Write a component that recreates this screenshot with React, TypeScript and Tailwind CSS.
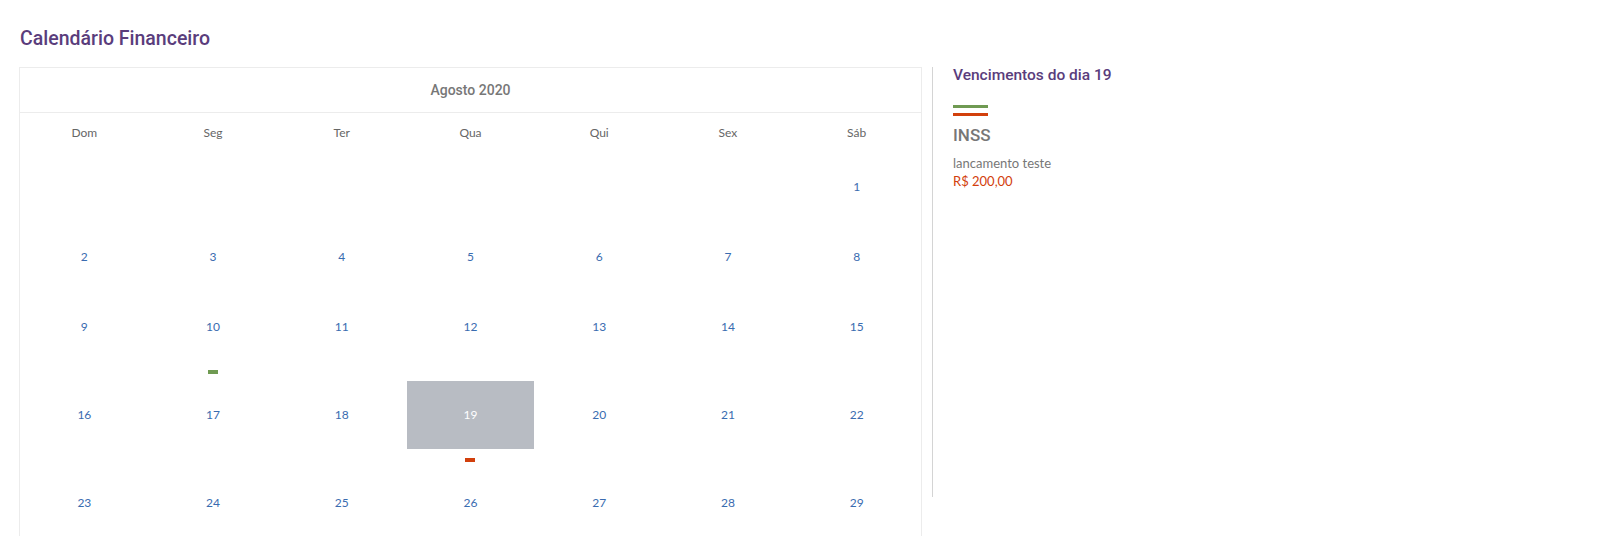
const weekdays = ['Dom', 'Seg', 'Ter', 'Qua', 'Qui', 'Sex', 'Sáb'];

const weeks: (number | null)[][] = [
  [null, null, null, null, null, null, 1],
  [2, 3, 4, 5, 6, 7, 8],
  [9, 10, 11, 12, 13, 14, 15],
  [16, 17, 18, 19, 20, 21, 22],
  [23, 24, 25, 26, 27, 28, 29],
  [30, 31, null, null, null, null, null],
];

// dias com vencimento -> cor da marca
const events: Record<number, string> = {
  10: 'bg-[#6f9a52]',
  19: 'bg-[#d2400c]',
};

const selected = 19;

export default function App() {
  return (
    <div className="min-h-screen bg-white pl-[19px] pt-[27px] font-['Roboto',sans-serif]">
      <h1 className="text-[19.5px] leading-[24px] font-medium text-[#5a3d7c] pl-px mb-[16px]">
        Calendário Financeiro
      </h1>

      <div className="flex items-start">
        {/* Calendar */}
        <div className="w-[903px] border border-[#ececec] border-b-0">
          <div className="h-[45px] border-b border-[#ececec] flex items-center justify-center text-[14px] font-medium text-[#777]">
            Agosto 2020
          </div>
          <div className="grid grid-cols-7 h-[40px] items-center font-['Lato',sans-serif] text-[12px] text-[#666]">
            {weekdays.map((d) => (
              <div key={d} className="text-center">
                {d}
              </div>
            ))}
          </div>
          {weeks.map((week, wi) => {
            const hasEvent = week.some((d) => d !== null && events[d]);
            return (
              <div key={wi} className="grid grid-cols-7 mb-[2px] font-['Lato',sans-serif] text-[12px]">
                {week.map((day, di) => (
                  <div key={di} className="flex flex-col">
                    <div
                      className={`h-[68px] mx-px flex items-center justify-center ${
                        day === selected ? 'bg-[#b8bcc3] text-white' : 'text-[#3a6cb0]'
                      }`}
                    >
                      {day ?? ''}
                    </div>
                    {hasEvent && (
                      <div className="h-[18px] pt-[9px] flex justify-center">
                        {day !== null && events[day] && <div className={`w-[10px] h-[4px] ${events[day]}`} />}
                      </div>
                    )}
                  </div>
                ))}
              </div>
            );
          })}
        </div>

        {/* Vencimentos */}
        <div className="ml-[10px] h-[430px] border-l border-[#d4d4d4] pl-[20px] w-[300px]">
          <h2 className="text-[15.5px] leading-[16px] font-medium text-[#5a3d7c]">Vencimentos do dia 19</h2>
          <div className="mt-[22px] w-[35px] h-[3px] bg-[#6f9a52]" />
          <div className="mt-[5px] w-[35px] h-[3px] bg-[#d2400c]" />
          <div className="mt-[9px] text-[17px] leading-[20px] font-medium text-[#777]">INSS</div>
          <div className="mt-[9px] font-['Lato',sans-serif] text-[13px] leading-[18px]">
            <div className="text-[#777]">lancamento teste</div>
            <div className="text-[#d2400c]">R$ 200,00</div>
          </div>
        </div>
      </div>
    </div>
  );
}
